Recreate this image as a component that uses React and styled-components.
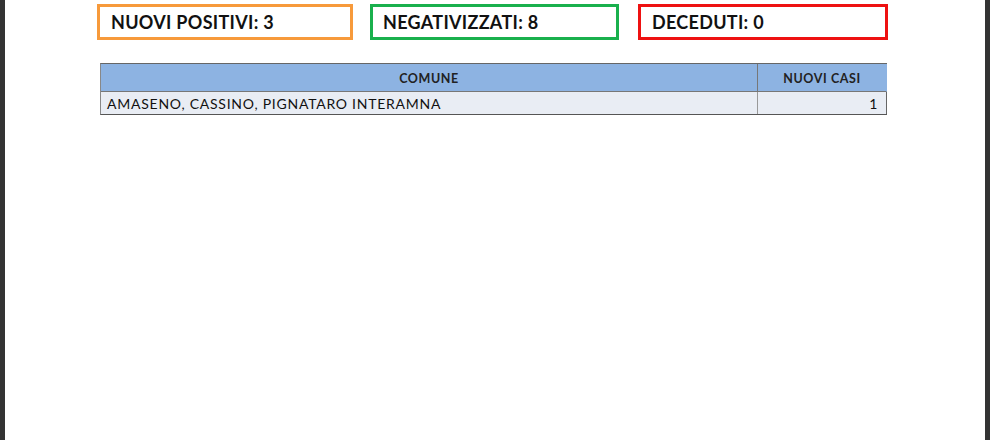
import React from "react";
import styled, { createGlobalStyle } from "styled-components";

const Global = createGlobalStyle`
  html, body { margin: 0; padding: 0; background: #fff; }
  body { font-family: "Lato", "Open Sans", sans-serif; }
`;

const Frame = styled.div`
  width: 990px;
  height: 440px;
  display: flex;
  background: #333;
  box-sizing: border-box;
  padding: 0 5px 0 5px;
`;

const Page = styled.div`
  flex: 1;
  background: #fff;
  padding: 4px 0 0 92px;
  display: flex;
  flex-direction: column;
`;

const Stats = styled.div`
  display: flex;
  gap: 17px;
`;

const Stat = styled.div`
  box-sizing: border-box;
  width: ${(p) => p.$w}px;
  height: 36px;
  border: 3px solid ${(p) => p.$color};
  padding: 0 0 0 ${(p) => p.$pl || 11}px;
  display: flex;
  align-items: center;
  font-family: "Lato", sans-serif;
  font-weight: 700;
  font-size: 18px;
  letter-spacing: 0.3px;
  color: #111;
  margin-left: ${(p) => p.$ml || 0}px;
`;

const Table = styled.div`
  margin: 23px 0 0 3px;
  width: 786px;
  display: grid;
  grid-template-columns: 657px 1fr;
  border-top: 1px solid #666;
  border-bottom: 1px solid #555;
  border-left: 1px solid #888;
  font-family: "Lato", sans-serif;
`;

const Head = styled.div`
  background: #8db3e2;
  height: 28px;
  display: flex;
  align-items: center;
  justify-content: center;
  font-size: 12.5px;
  letter-spacing: 0.6px;
  font-weight: 700;
  color: #222;
  border-right: 1px solid ${(p) => (p.$last ? "#8db3e2" : "#777")};
  border-bottom: 1px solid #777;
  padding-top: 2px;
  box-sizing: border-box;
`;

const Cell = styled.div`
  background: #e9edf4;
  height: 22px;
  display: flex;
  align-items: center;
  justify-content: ${(p) => (p.$num ? "flex-end" : "flex-start")};
  padding: 0 ${(p) => (p.$num ? "8px" : "0")} 0 ${(p) => (p.$num ? "0" : "6px")};
  font-size: 14px;
  letter-spacing: 0.75px;
  color: #111;
  border-right: 1px solid ${(p) => (p.$num ? "#666" : "#999")};
  box-sizing: border-box;
`;

export default function App() {
  return (
    <>
      <Global />
      <Frame>
        <Page>
          <Stats>
            <Stat $color="#f79a3b" $w={256}>NUOVI POSITIVI: 3</Stat>
            <Stat $color="#19b04d" $w={249} $pl={10}>NEGATIVIZZATI: 8</Stat>
            <Stat $color="#ee1111" $w={250} $ml={2}>DECEDUTI: 0</Stat>
          </Stats>
          <Table>
            <Head>COMUNE</Head>
            <Head $last>NUOVI CASI</Head>
            <Cell>AMASENO, CASSINO, PIGNATARO INTERAMNA</Cell>
            <Cell $num>1</Cell>
          </Table>
        </Page>
      </Frame>
    </>
  );
}
